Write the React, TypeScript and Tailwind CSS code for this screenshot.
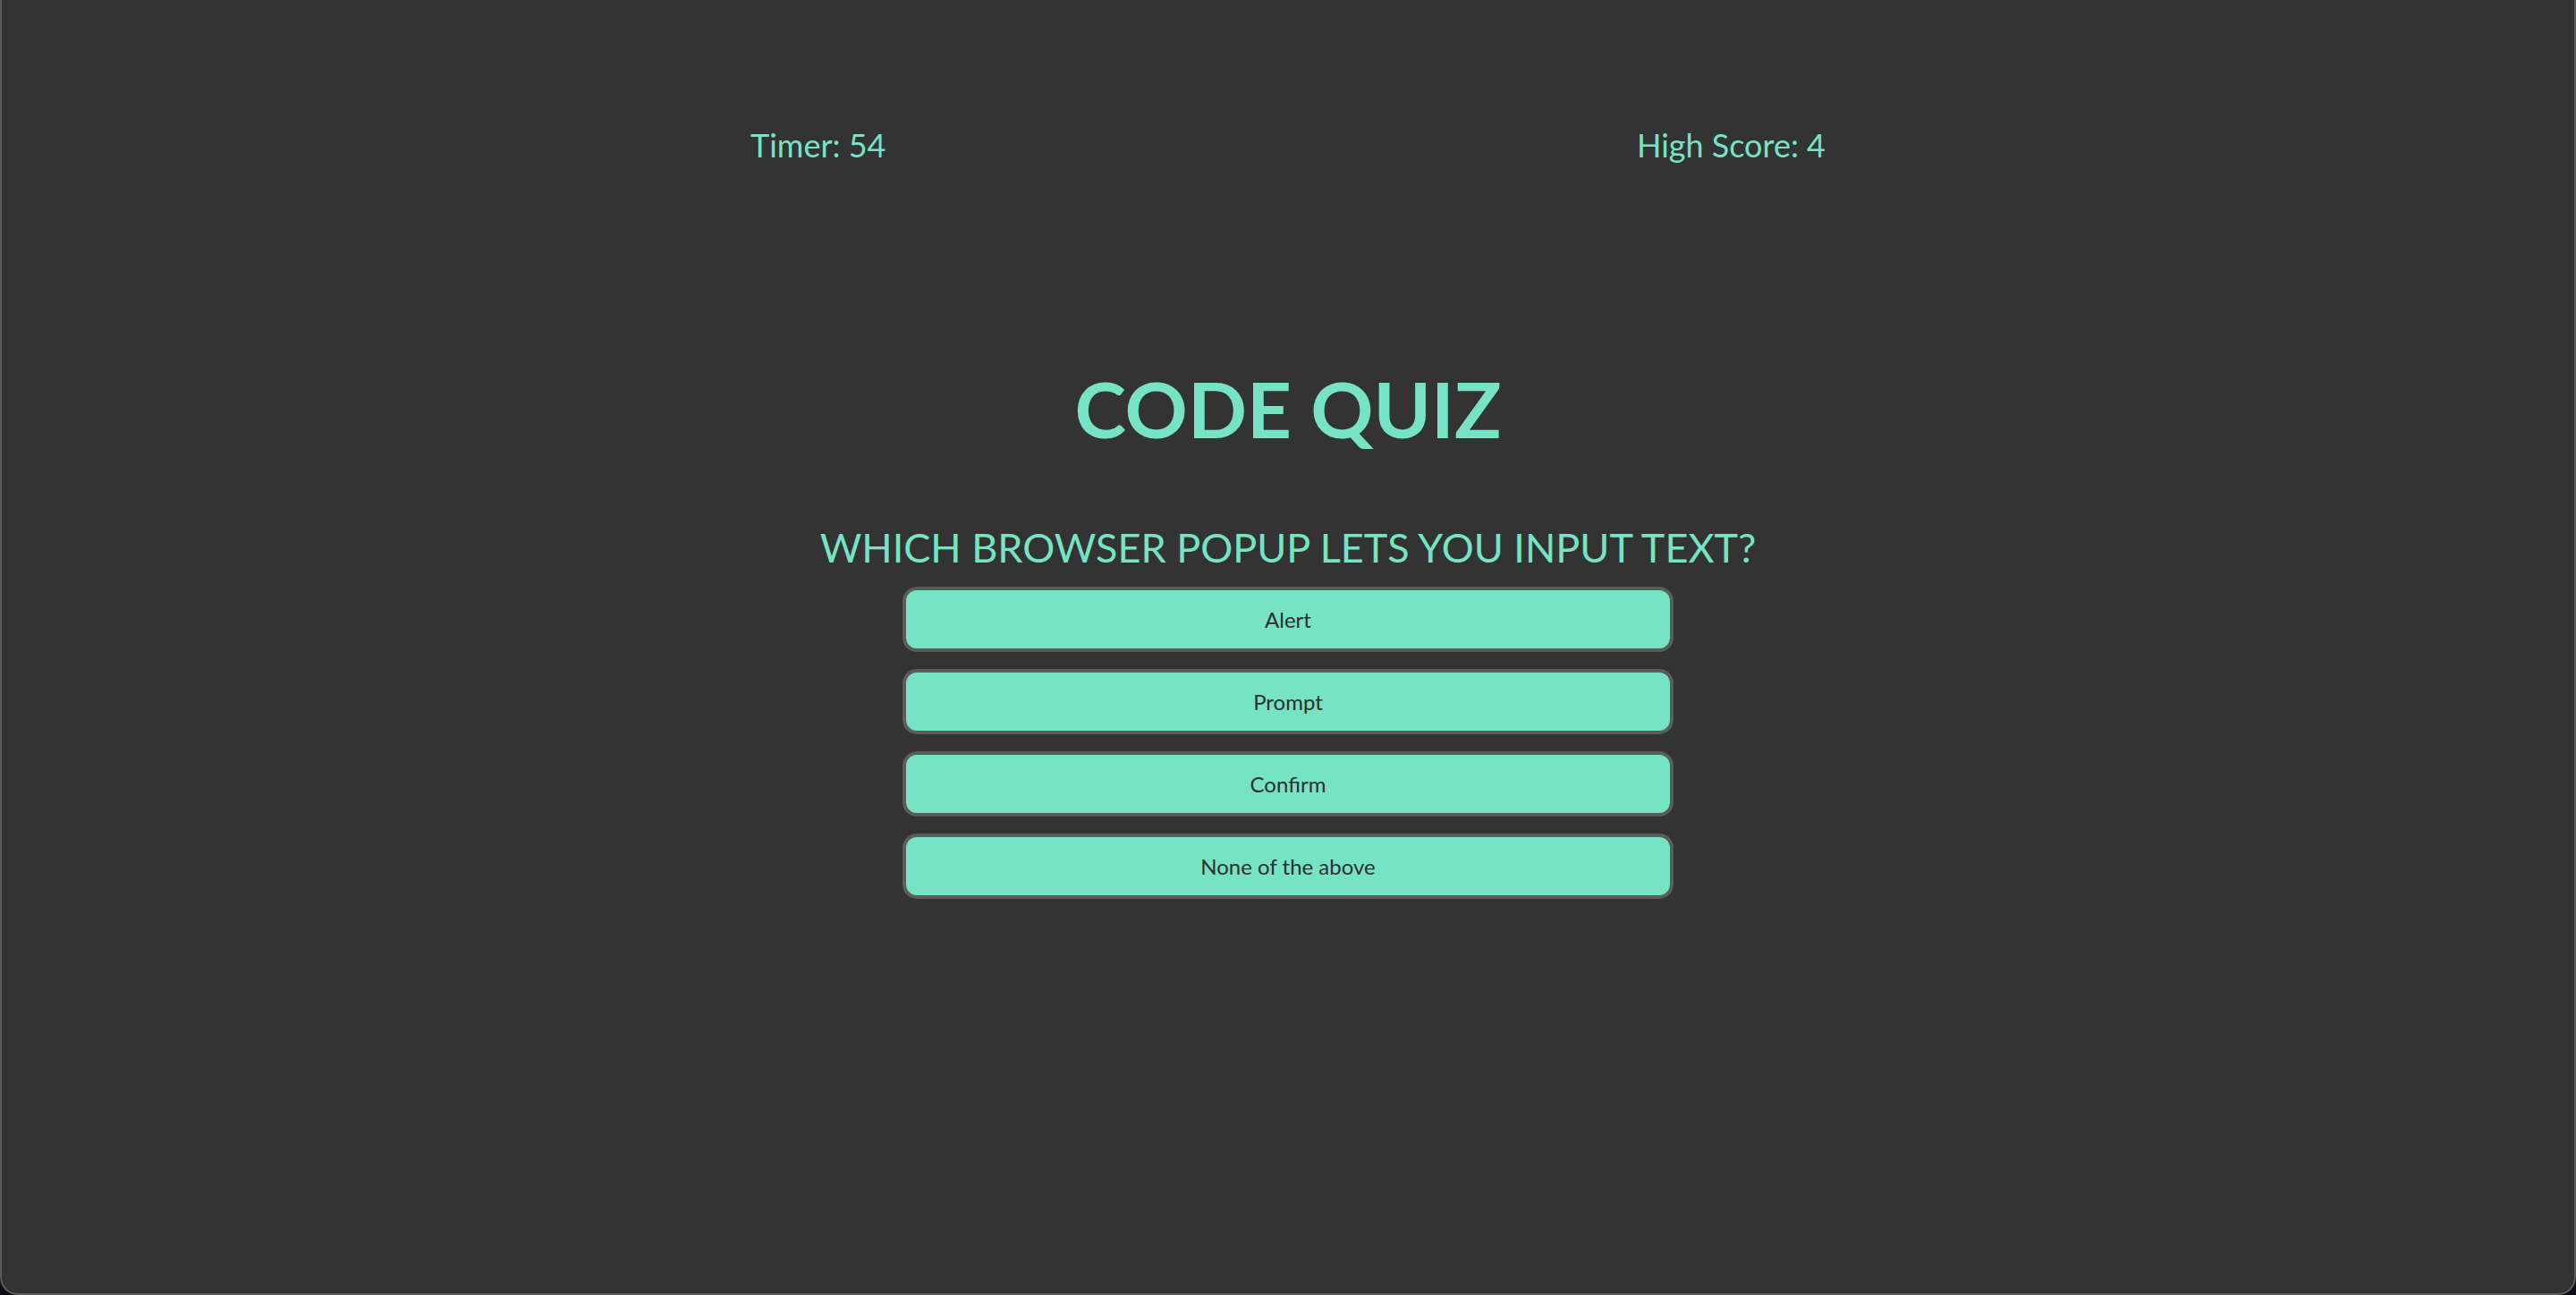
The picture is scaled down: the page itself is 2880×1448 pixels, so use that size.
const answers = ['Alert', 'Prompt', 'Confirm', 'None of the above'];

export default function App() {
    return (
        <div className="h-[1448px] w-full bg-[#0d0d1a] font-['Lato',sans-serif]">
            <div className="h-full bg-[#333333] border-x-2 border-b-2 border-[#5a5a5a] rounded-b-[20px] flex flex-col items-center">
                <div className="w-[1202px] mt-[142px] flex justify-between text-[36px] leading-[41px] text-[#76e3c5]">
                    <span>Timer: 54</span>
                    <span>High Score: 4</span>
                </div>

                <h1 className="mt-[230px] text-[87px] leading-none font-bold text-[#76e3c5]">CODE QUIZ</h1>

                <h2 className="mt-[90px] text-[45px] leading-none text-[#76e3c5]">WHICH BROWSER POPUP LETS YOU INPUT TEXT?</h2>

                <div className="mt-[21px] w-[862px] flex flex-col gap-[19px]">
                    {answers.map((a) => (
                        <button
                            key={a}
                            className="h-[73px] w-full rounded-[16px] border-4 border-[#5c5c5c] bg-[#76e3c5] text-[24px] text-[#2e2e2e]"
                        >
                            {a}
                        </button>
                    ))}
                </div>
            </div>
        </div>
    );
}
